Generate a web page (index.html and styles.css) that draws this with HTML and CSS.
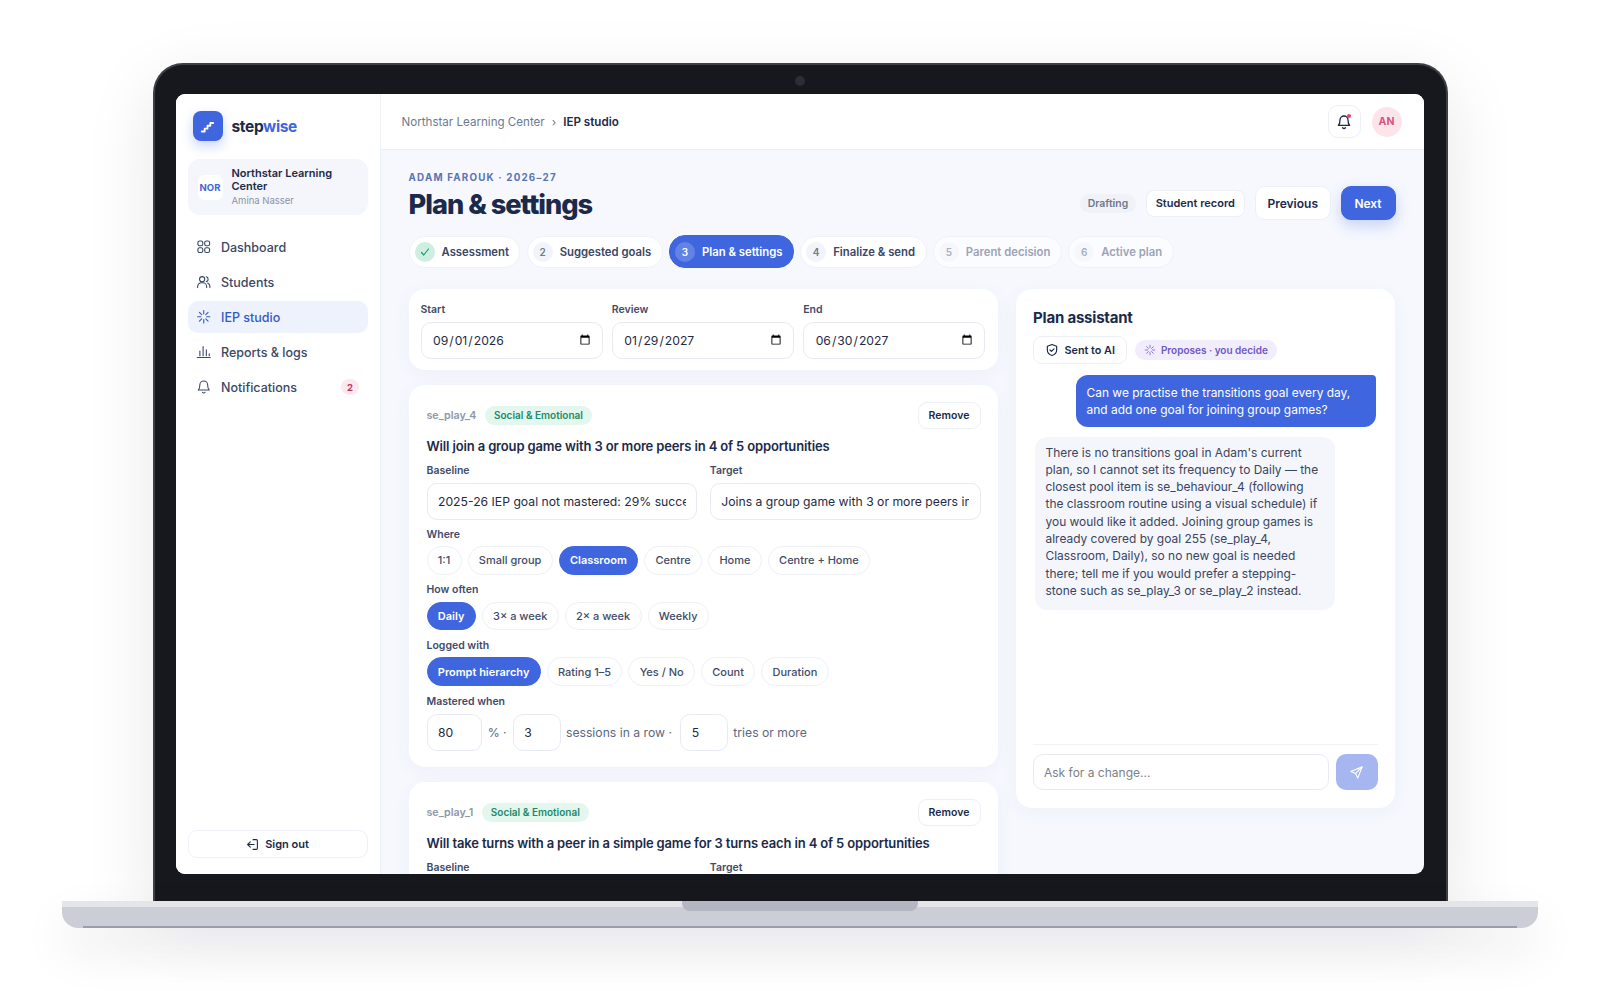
FILE: index.html
```html
<!doctype html>
<html lang="en">
  <head>
    <meta charset="UTF-8" />
    <meta name="viewport" content="width=device-width, initial-scale=1.0" />
    <title>Stepwise - Plan &amp; settings</title>
    <link rel="stylesheet" href="styles.css">
  </head>

  <body>
    <div class="laptop">
      <div class="lid">
        <span class="camera"></span>
        <div class="screen">
          <aside class="sidebar">
            <div class="brand">
              <span class="brand-mark">
                <svg viewBox="0 0 24 24" width="17" height="17" fill="none" stroke="#fff" stroke-width="2.6" stroke-linecap="round" stroke-linejoin="round"><path d="M4 19h4v-4h4v-4h4V7h4" /></svg>
              </span>
              <span class="brand-name">step<em>wise</em></span>
            </div>

            <div class="org">
              <span class="org-tile">NOR</span>
              <div>
                <div class="org-name">Northstar Learning Center</div>
                <div class="org-user">Amina Nasser</div>
              </div>
            </div>

            <nav class="nav">
              <a class="nav-item">
                <svg class="nav-icon" viewBox="0 0 24 24"><rect x="3" y="3" width="7.5" height="7.5" rx="2.5" /><rect x="13.5" y="3" width="7.5" height="7.5" rx="2.5" /><rect x="3" y="13.5" width="7.5" height="7.5" rx="2.5" /><rect x="13.5" y="13.5" width="7.5" height="7.5" rx="2.5" /></svg>
                Dashboard
              </a>
              <a class="nav-item">
                <svg class="nav-icon" viewBox="0 0 24 24"><circle cx="9.5" cy="8" r="4" /><path d="M2.5 21v-1.500a6 6 0 0 1 6-6h2a6 6 0 0 1 6 6V21" /><path d="M16 4.200a4 4 0 0 1 0 7.600" /><path d="M21.500 21v-1.500a6 6 0 0 0-3.500-5.400" /></svg>
                Students
              </a>
              <a class="nav-item active">
                <svg class="nav-icon" viewBox="0 0 24 24"><path d="M12 2.500v5M12 16.500v5M2.500 12h5M16.500 12h5M5.300 5.300l3.500 3.500M15.200 15.200l3.500 3.500M5.300 18.700l3.500-3.500M15.200 8.800l3.500-3.500" /></svg>
                IEP studio
              </a>
              <a class="nav-item">
                <svg class="nav-icon" viewBox="0 0 24 24"><path d="M2 21h20M6 18v-7M11 18V4M16 18v-9M20.500 18v-3" /></svg>
                Reports &amp; logs
              </a>
              <a class="nav-item">
                <svg class="nav-icon" viewBox="0 0 24 24"><path d="M6 9a6 6 0 0 1 12 0c0 6 2.500 8 2.500 8h-17S6 15 6 9" /><path d="M10 20.500a2.200 2.200 0 0 0 4 0" /></svg>
                Notifications
                <span class="nav-badge">2</span>
              </a>
            </nav>

            <button class="signout">
              <svg viewBox="0 0 24 24" width="13" height="13" fill="none" stroke="currentColor" stroke-width="2" stroke-linecap="round" stroke-linejoin="round"><path d="M13 3h6a2 2 0 0 1 2 2v14a2 2 0 0 1-2 2h-6" /><path d="M15 12H3M8 7l-5 5 5 5" /></svg>
              Sign out
            </button>
          </aside>

          <div class="main">
            <header class="topbar">
              <div class="crumbs">
                <span>Northstar Learning Center</span>
                <span class="crumb-sep">›</span>
                <strong>IEP studio</strong>
              </div>
              <div class="top-right">
                <button class="bell">
                  <svg viewBox="0 0 24 24" width="16" height="16" fill="none" stroke="#1b2a4a" stroke-width="2" stroke-linecap="round" stroke-linejoin="round"><path d="M6 9a6 6 0 0 1 12 0c0 6 2.500 8 2.500 8h-17S6 15 6 9" /><path d="M10 20.500a2.200 2.200 0 0 0 4 0" /></svg>
                  <span class="bell-dot"></span>
                </button>
                <span class="avatar">AN</span>
              </div>
            </header>

            <div class="content">
              <div class="page-head">
                <div>
                  <div class="eyebrow">Adam Farouk · 2026–27</div>
                  <h1>Plan &amp; settings</h1>
                </div>
                <div class="page-actions">
                  <span class="status">Drafting</span>
                  <button class="btn btn-small">Student record</button>
                  <button class="btn">Previous</button>
                  <button class="btn btn-primary">Next</button>
                </div>
              </div>

              <div class="steps">
                <div class="step"><span class="step-num done"><svg viewBox="0 0 24 24" width="12" height="12" fill="none" stroke="#1f9d72" stroke-width="2.400" stroke-linecap="round" stroke-linejoin="round"><path d="M5 13l4.500 5L19 6" /></svg></span>Assessment</div>
                <div class="step"><span class="step-num">2</span>Suggested goals</div>
                <div class="step current"><span class="step-num">3</span>Plan &amp; settings</div>
                <div class="step"><span class="step-num">4</span>Finalize &amp; send</div>
                <div class="step locked"><span class="step-num">5</span>Parent decision</div>
                <div class="step locked"><span class="step-num">6</span>Active plan</div>
              </div>

              <div class="columns">
                <div class="left">
                  <section class="card dates">
                    <div>
                      <label class="label">Start</label>
                      <input class="field" type="date" value="2026-09-01">
                    </div>
                    <div>
                      <label class="label">Review</label>
                      <input class="field" type="date" value="2027-01-29">
                    </div>
                    <div>
                      <label class="label">End</label>
                      <input class="field" type="date" value="2027-06-30">
                    </div>
                  </section>

                  <section class="card goal">
                    <div class="goal-top">
                      <span class="goal-id">se_play_4</span>
                      <span class="domain">Social &amp; Emotional</span>
                      <button class="remove">Remove</button>
                    </div>
                    <h3>Will join a group game with 3 or more peers in 4 of 5 opportunities</h3>
                    <div class="two">
                      <div>
                        <label class="label">Baseline</label>
                        <input class="field" value="2025-26 IEP goal not mastered: 29% success across 12 sessions">
                      </div>
                      <div>
                        <label class="label">Target</label>
                        <input class="field" value="Joins a group game with 3 or more peers in 4 of 5 opportunities">
                      </div>
                    </div>
                    <label class="label">Where</label>
                    <div class="chips">
                      <span class="chip">1:1</span>
                      <span class="chip">Small group</span>
                      <span class="chip on">Classroom</span>
                      <span class="chip">Centre</span>
                      <span class="chip">Home</span>
                      <span class="chip">Centre + Home</span>
                    </div>
                    <label class="label">How often</label>
                    <div class="chips">
                      <span class="chip on">Daily</span>
                      <span class="chip">3× a week</span>
                      <span class="chip">2× a week</span>
                      <span class="chip">Weekly</span>
                    </div>
                    <label class="label">Logged with</label>
                    <div class="chips">
                      <span class="chip on">Prompt hierarchy</span>
                      <span class="chip">Rating 1–5</span>
                      <span class="chip">Yes / No</span>
                      <span class="chip">Count</span>
                      <span class="chip">Duration</span>
                    </div>
                    <label class="label">Mastered when</label>
                    <div class="mastery">
                      <input class="field num wide" value="80">
                      <span class="pct">% ·</span>
                      <input class="field num" value="3">
                      <span class="row-text">sessions in a row ·</span>
                      <input class="field num" value="5">
                      <span>tries or more</span>
                    </div>
                  </section>

                  <section class="card goal">
                    <div class="goal-top">
                      <span class="goal-id">se_play_1</span>
                      <span class="domain">Social &amp; Emotional</span>
                      <button class="remove">Remove</button>
                    </div>
                    <h3>Will take turns with a peer in a simple game for 3 turns each in 4 of 5 opportunities</h3>
                    <div class="two">
                      <div>
                        <label class="label">Baseline</label>
                        <input class="field" value="2025-26 IEP goal not mastered">
                      </div>
                      <div>
                        <label class="label">Target</label>
                        <input class="field" value="Takes turns with a peer">
                      </div>
                    </div>
                  </section>
                </div>

                <section class="card assistant">
                  <h2>Plan assistant</h2>
                  <div class="assist-tags">
                    <button class="sent">
                      <svg viewBox="0 0 24 24" width="14" height="14" fill="none" stroke="#1b2a4a" stroke-width="2" stroke-linecap="round" stroke-linejoin="round"><path d="M12 2.500l8 3v6.500c0 5-3.500 8-8 9.500-4.500-1.500-8-4.500-8-9.500V5.500z" /><path d="M8.500 12l2.500 2.500 4.500-4.500" /></svg>
                      Sent to AI
                    </button>
                    <span class="proposes">
                      <svg viewBox="0 0 24 24" width="12" height="12" fill="none" stroke="#8b78d6" stroke-width="2" stroke-linecap="round"><path d="M12 2.500v5M12 16.500v5M2.500 12h5M16.500 12h5M5.300 5.300l3.500 3.500M15.200 15.200l3.500 3.500M5.300 18.700l3.500-3.500M15.200 8.800l3.500-3.500" /></svg>
                      Proposes · you decide
                    </span>
                  </div>
                  <div class="chat">
                    <div class="bubble mine">Can we practise the transitions goal every day, and add one goal for joining group games?</div>
                    <div class="bubble theirs">There is no transitions goal in Adam's current plan, so I cannot set its frequency to Daily — the closest pool item is se_behaviour_4 (following the classroom routine using a visual schedule) if you would like it added. Joining group games is already covered by goal 255 (se_play_4, Classroom, Daily), so no new goal is needed there; tell me if you would prefer a stepping-stone such as se_play_3 or se_play_2 instead.</div>
                  </div>
                  <div class="composer">
                    <input class="field" placeholder="Ask for a change...">
                    <button class="send">
                      <svg viewBox="0 0 24 24" width="15" height="15" fill="none" stroke="#fff" stroke-width="1.800" stroke-linecap="round" stroke-linejoin="round"><path d="M21 3L3 10.500l7.500 3L14 21z" /><path d="M10.500 13.500L21 3" /></svg>
                    </button>
                  </div>
                </section>
              </div>
            </div>
          </div>
        </div>
      </div>
      <div class="base">
        <span class="notch"></span>
        <span class="base-line"></span>
      </div>
    </div>
  </body>
</html>
```

FILE: styles.css
```css
html,
body {
  margin: 0;
  padding: 0;
  height: 991px;
  overflow: hidden;
  background: #fff;
  font-family: Inter, "Liberation Sans", sans-serif;
  color: #1b2a4a;
}
* {
  box-sizing: border-box;
}
button,
input {
  font-family: inherit;
}

/* laptop frame */
.laptop {
  width: 1476px;
  margin: 63px auto 0;
  display: flex;
  flex-direction: column;
  align-items: center;
}
.lid {
  position: relative;
  width: 1295px;
  height: 838px;
  padding: 29px 21px 0;
  background: #16181d;
  border: 2px solid #3c3f46;
  border-bottom: 0;
  border-radius: 30px 30px 0 0;
  box-shadow: 0 20px 70px rgba(20, 24, 40, 0.1);
}
.camera {
  position: absolute;
  top: 11px;
  left: 50%;
  width: 10px;
  height: 10px;
  margin-left: -5px;
  border-radius: 50%;
  background: #2b2e35;
}
.screen {
  width: 1248px;
  height: 780px;
  display: flex;
  overflow: hidden;
  border-radius: 9px;
  background: #f6f8fe;
}
.base {
  position: relative;
  width: 100%;
  height: 27px;
  display: flex;
  justify-content: center;
  background: linear-gradient(#e3e5e9 0, #e3e5e9 6px, #cbced6 6px);
  border-radius: 0 0 16px 16px;
  box-shadow: 0 22px 50px rgba(20, 24, 40, 0.09);
}
.notch {
  width: 236px;
  height: 10px;
  border-radius: 0 0 8px 8px;
  background: #b4b7c1;
}
.base-line {
  position: absolute;
  left: 21px;
  right: 21px;
  bottom: 0;
  height: 2px;
  background: #9a9dab;
}

/* sidebar */
.sidebar {
  width: 205px;
  flex: none;
  display: flex;
  flex-direction: column;
  padding: 17px 12px 16px;
  background: #fff;
  border-right: 1px solid #eceff6;
}
.brand {
  display: flex;
  align-items: center;
  gap: 9px;
  padding-left: 5px;
}
.brand-mark {
  width: 30px;
  height: 30px;
  display: flex;
  align-items: center;
  justify-content: center;
  border-radius: 8px;
  background: #3f66de;
  box-shadow: 0 5px 12px rgba(63, 102, 222, 0.28);
}
.brand-name {
  font-size: 15.500px;
  font-weight: 700;
  letter-spacing: -0.35px;
}
.brand-name em {
  font-style: normal;
  color: #3f66de;
}
.org {
  display: flex;
  align-items: center;
  gap: 9px;
  height: 56px;
  margin-top: 18px;
  padding: 0 10px;
  border-radius: 12px;
  background: #f4f6fc;
}
.org-tile {
  width: 25px;
  height: 25px;
  flex: none;
  display: flex;
  align-items: center;
  justify-content: center;
  border-radius: 7px;
  background: #fff;
  font-size: 9.500px;
  font-weight: 700;
  color: #3f66de;
}
.org-name {
  font-size: 11px;
  font-weight: 600;
  line-height: 13px;
}
.org-user {
  margin-top: 2px;
  font-size: 9.500px;
  line-height: 12px;
  color: #8a93a8;
}
.nav {
  margin-top: 16px;
  display: flex;
  flex-direction: column;
  gap: 3px;
}
.nav-item {
  height: 32px;
  display: flex;
  align-items: center;
  gap: 9.500px;
  padding: 0 8.500px;
  border-radius: 10px;
  font-size: 12.500px;
  font-weight: 500;
  color: #3a4765;
}
.nav-item.active {
  background: #eef2fd;
  color: #3558c4;
}
.nav-icon {
  width: 15.500px;
  height: 15.500px;
  flex: none;
  fill: none;
  stroke: currentColor;
  stroke-width: 1.700;
  stroke-linecap: round;
  stroke-linejoin: round;
}
.nav-badge {
  margin-left: auto;
  width: 18px;
  height: 16px;
  display: flex;
  align-items: center;
  justify-content: center;
  border-radius: 8px;
  background: #fde8ee;
  font-size: 9.500px;
  font-weight: 700;
  color: #b83a62;
}
.signout {
  margin-top: auto;
  height: 28px;
  display: flex;
  align-items: center;
  justify-content: center;
  gap: 6px;
  border: 1px solid #edf0f6;
  border-radius: 9px;
  background: #fff;
  font-size: 11px;
  font-weight: 600;
  color: #1b2a4a;
}

/* top bar */
.main {
  flex: 1;
  min-width: 0;
  display: flex;
  flex-direction: column;
}
.topbar {
  height: 56px;
  flex: none;
  display: flex;
  align-items: center;
  justify-content: space-between;
  padding: 0 22px 0 21px;
  background: #fff;
  border-bottom: 1px solid #eceff6;
}
.crumbs {
  display: flex;
  align-items: center;
  gap: 7px;
  font-size: 11.600px;
  color: #6d7a94;
}
.crumbs strong {
  font-weight: 600;
  color: #1b2a4a;
}
.top-right {
  display: flex;
  align-items: center;
  gap: 11px;
}
.bell {
  position: relative;
  width: 33px;
  height: 33px;
  display: flex;
  align-items: center;
  justify-content: center;
  padding: 0;
  border: 1px solid #eceff6;
  border-radius: 10px;
  background: #fff;
}
.bell-dot {
  position: absolute;
  top: 8px;
  right: 9px;
  width: 4px;
  height: 4px;
  border-radius: 50%;
  background: #e0446a;
}
.avatar {
  width: 30px;
  height: 30px;
  display: flex;
  align-items: center;
  justify-content: center;
  border-radius: 50%;
  background: #fde4ea;
  font-size: 10.500px;
  font-weight: 700;
  color: #d4567f;
}

/* page content */
.content {
  padding: 22px 28px 0;
}
.page-head {
  display: flex;
  align-items: flex-end;
  justify-content: space-between;
}
.eyebrow {
  font-size: 9.800px;
  font-weight: 700;
  line-height: 12px;
  letter-spacing: 1.200px;
  text-transform: uppercase;
  color: #5a74b4;
}
h1 {
  margin: 3px 0 0;
  font-size: 27.200px;
  font-weight: 800;
  line-height: 36px;
  letter-spacing: -1px;
}
.page-actions {
  display: flex;
  align-items: center;
  gap: 10px;
  margin-bottom: 3px;
}
.status {
  height: 19px;
  display: flex;
  align-items: center;
  padding: 0 7.500px;
  border-radius: 10px;
  background: #f0f2f7;
  font-size: 10.400px;
  font-weight: 600;
  color: #6e7a90;
}
.btn {
  height: 34px;
  padding: 0 11.500px;
  border: 1px solid #eceff6;
  border-radius: 10px;
  background: #fff;
  font-size: 12px;
  font-weight: 600;
  color: #1b2a4a;
}
.btn-small {
  height: 27px;
  padding: 0 9px;
  border-radius: 8px;
  font-size: 11px;
}
.btn-primary {
  width: 55px;
  padding: 0;
  border-color: #3f66de;
  background: #3f66de;
  color: #fff;
  box-shadow: 0 6px 14px rgba(63, 102, 222, 0.25);
}
.steps {
  display: flex;
  align-items: center;
  gap: 6.300px;
  margin-top: 12px;
}
.step {
  height: 32px;
  display: flex;
  align-items: center;
  gap: 7px;
  padding: 0 10.500px 0 5px;
  border: 1px solid #eef1f8;
  border-radius: 16px;
  background: #fff;
  font-size: 11.300px;
  font-weight: 600;
  color: #3a4765;
}
.step-num {
  width: 20px;
  height: 20px;
  display: flex;
  align-items: center;
  justify-content: center;
  border-radius: 50%;
  background: #f2f4f9;
  font-size: 10px;
  color: #6e7a90;
}
.step-num.done {
  background: #cfeee2;
}
.step.current {
  height: 33px;
  border-color: #3f66de;
  background: #3f66de;
  color: #fff;
}
.step.current .step-num {
  background: #6183e6;
  color: #fff;
}
.step.locked {
  background: #fbfcff;
  color: #9ca4b6;
}
.step.locked .step-num {
  background: #f6f7fb;
  color: #a8afbf;
}
.columns {
  display: grid;
  grid-template-columns: 589px 379px;
  gap: 18px;
  align-items: start;
  margin-top: 21px;
}
.left {
  display: flex;
  flex-direction: column;
  gap: 14.500px;
}
.card {
  border-radius: 16px;
  background: #fff;
  box-shadow: 0 4px 18px rgba(70, 90, 160, 0.05);
}
.dates {
  display: grid;
  grid-template-columns: 1fr 1fr 1fr;
  gap: 9px;
  height: 81px;
  padding: 14px 12px 0;
}
.dates .field {
  margin-top: 6px;
  height: 36.500px;
  padding-right: 9px;
}
.label {
  display: block;
  font-size: 10.500px;
  font-weight: 600;
  line-height: 13px;
  color: #3f4b68;
}
.field {
  display: block;
  width: 100%;
  height: 37px;
  margin-top: 6px;
  padding: 0 10.500px;
  border: 1px solid #e7eaf1;
  border-radius: 10px;
  background: #fff;
  font-size: 12.200px;
  color: #1f2a44;
  outline: none;
}
.goal {
  padding: 17px 17px 16.500px 18px;
}
.goal-top {
  display: flex;
  align-items: center;
  height: 27px;
  gap: 8.500px;
}
.goal-id {
  font-size: 10.700px;
  font-weight: 600;
  color: #8e97ab;
}
.domain {
  height: 19px;
  display: flex;
  align-items: center;
  padding: 0 9px;
  border-radius: 10px;
  background: #e3f7ef;
  font-size: 10px;
  font-weight: 600;
  color: #1f8a68;
}
.remove {
  margin-left: auto;
  height: 27px;
  width: 63px;
  padding: 0;
  border: 1px solid #eceff6;
  border-radius: 9px;
  background: #fff;
  font-size: 10.500px;
  font-weight: 600;
  color: #1b2a4a;
}
.goal h3 {
  margin: 8px 0 0;
  font-size: 13px;
  font-weight: 600;
  line-height: 18px;
  letter-spacing: -0.15px;
}
.two {
  display: grid;
  grid-template-columns: 1fr 1fr;
  gap: 12.500px;
  margin-top: 9px;
}
.goal > .label {
  margin-top: 8px;
}
.goal > .chips + .label {
  margin-top: 8.700px;
}
.chips {
  display: flex;
  gap: 6px;
  margin-top: 5.500px;
}
.chip {
  height: 28.500px;
  display: flex;
  align-items: center;
  padding: 0 10.300px;
  border: 1px solid #eef0f6;
  border-radius: 15px;
  font-size: 11px;
  font-weight: 500;
  color: #3f4b68;
}
.chip.on {
  border-color: #3f66de;
  background: #3f66de;
  font-weight: 600;
  color: #fff;
}
.mastery {
  display: flex;
  align-items: center;
  gap: 5.200px;
  margin-top: 6px;
  font-size: 12.200px;
  color: #5d6880;
}
.mastery .field {
  margin-top: 0;
}
.pct {
  margin: 0 1px;
}
.row-text {
  margin-right: 3px;
}
.num {
  width: 48px;
  flex: none;
}
.num.wide {
  width: 55px;
}

/* assistant panel */
.assistant {
  height: 519px;
  display: flex;
  flex-direction: column;
  padding: 18px 17px;
}
.assistant h2 {
  margin: 0;
  padding-left: 0.5px;
  font-size: 15px;
  font-weight: 700;
  line-height: 21px;
  letter-spacing: -0.2px;
}
.assist-tags {
  display: flex;
  align-items: center;
  gap: 8px;
  margin-top: 8px;
}
.sent {
  height: 28px;
  display: flex;
  align-items: center;
  gap: 6px;
  padding: 0 11px;
  border: 1px solid #eceff6;
  border-radius: 9px;
  background: #fff;
  font-size: 10.800px;
  font-weight: 600;
  color: #1b2a4a;
}
.proposes {
  height: 20px;
  display: flex;
  align-items: center;
  gap: 5px;
  padding: 0 9px;
  border-radius: 10px;
  background: #f1edfd;
  font-size: 10px;
  font-weight: 600;
  color: #6d57c0;
}
.chat {
  flex: 1;
  display: flex;
  flex-direction: column;
  gap: 10px;
  margin-top: 11px;
}
.bubble {
  font-size: 11.950px;
  line-height: 17.300px;
}
.bubble.mine {
  align-self: flex-end;
  width: 300px;
  margin-right: 2px;
  padding: 8.500px 11px;
  border-radius: 12px 4px 12px 12px;
  background: #3f66de;
  color: #fff;
}
.bubble.theirs {
  align-self: flex-start;
  width: 300px;
  margin-left: 2px;
  padding: 7px 11px 11px;
  border-radius: 12px;
  background: #f4f6fc;
  color: #3a4560;
}
.composer {
  display: flex;
  gap: 7px;
  margin-top: 10px;
  padding-top: 9px;
  border-top: 1px solid #f0f2f7;
}
.composer .field {
  margin-top: 0;
  height: 36px;
  font-size: 12px;
}
.composer .field::placeholder {
  color: #7c7f88;
}
.send {
  width: 42px;
  height: 36px;
  flex: none;
  display: flex;
  align-items: center;
  justify-content: center;
  padding: 0;
  border: 0;
  border-radius: 10px;
  background: #a5b6f0;
}
```
